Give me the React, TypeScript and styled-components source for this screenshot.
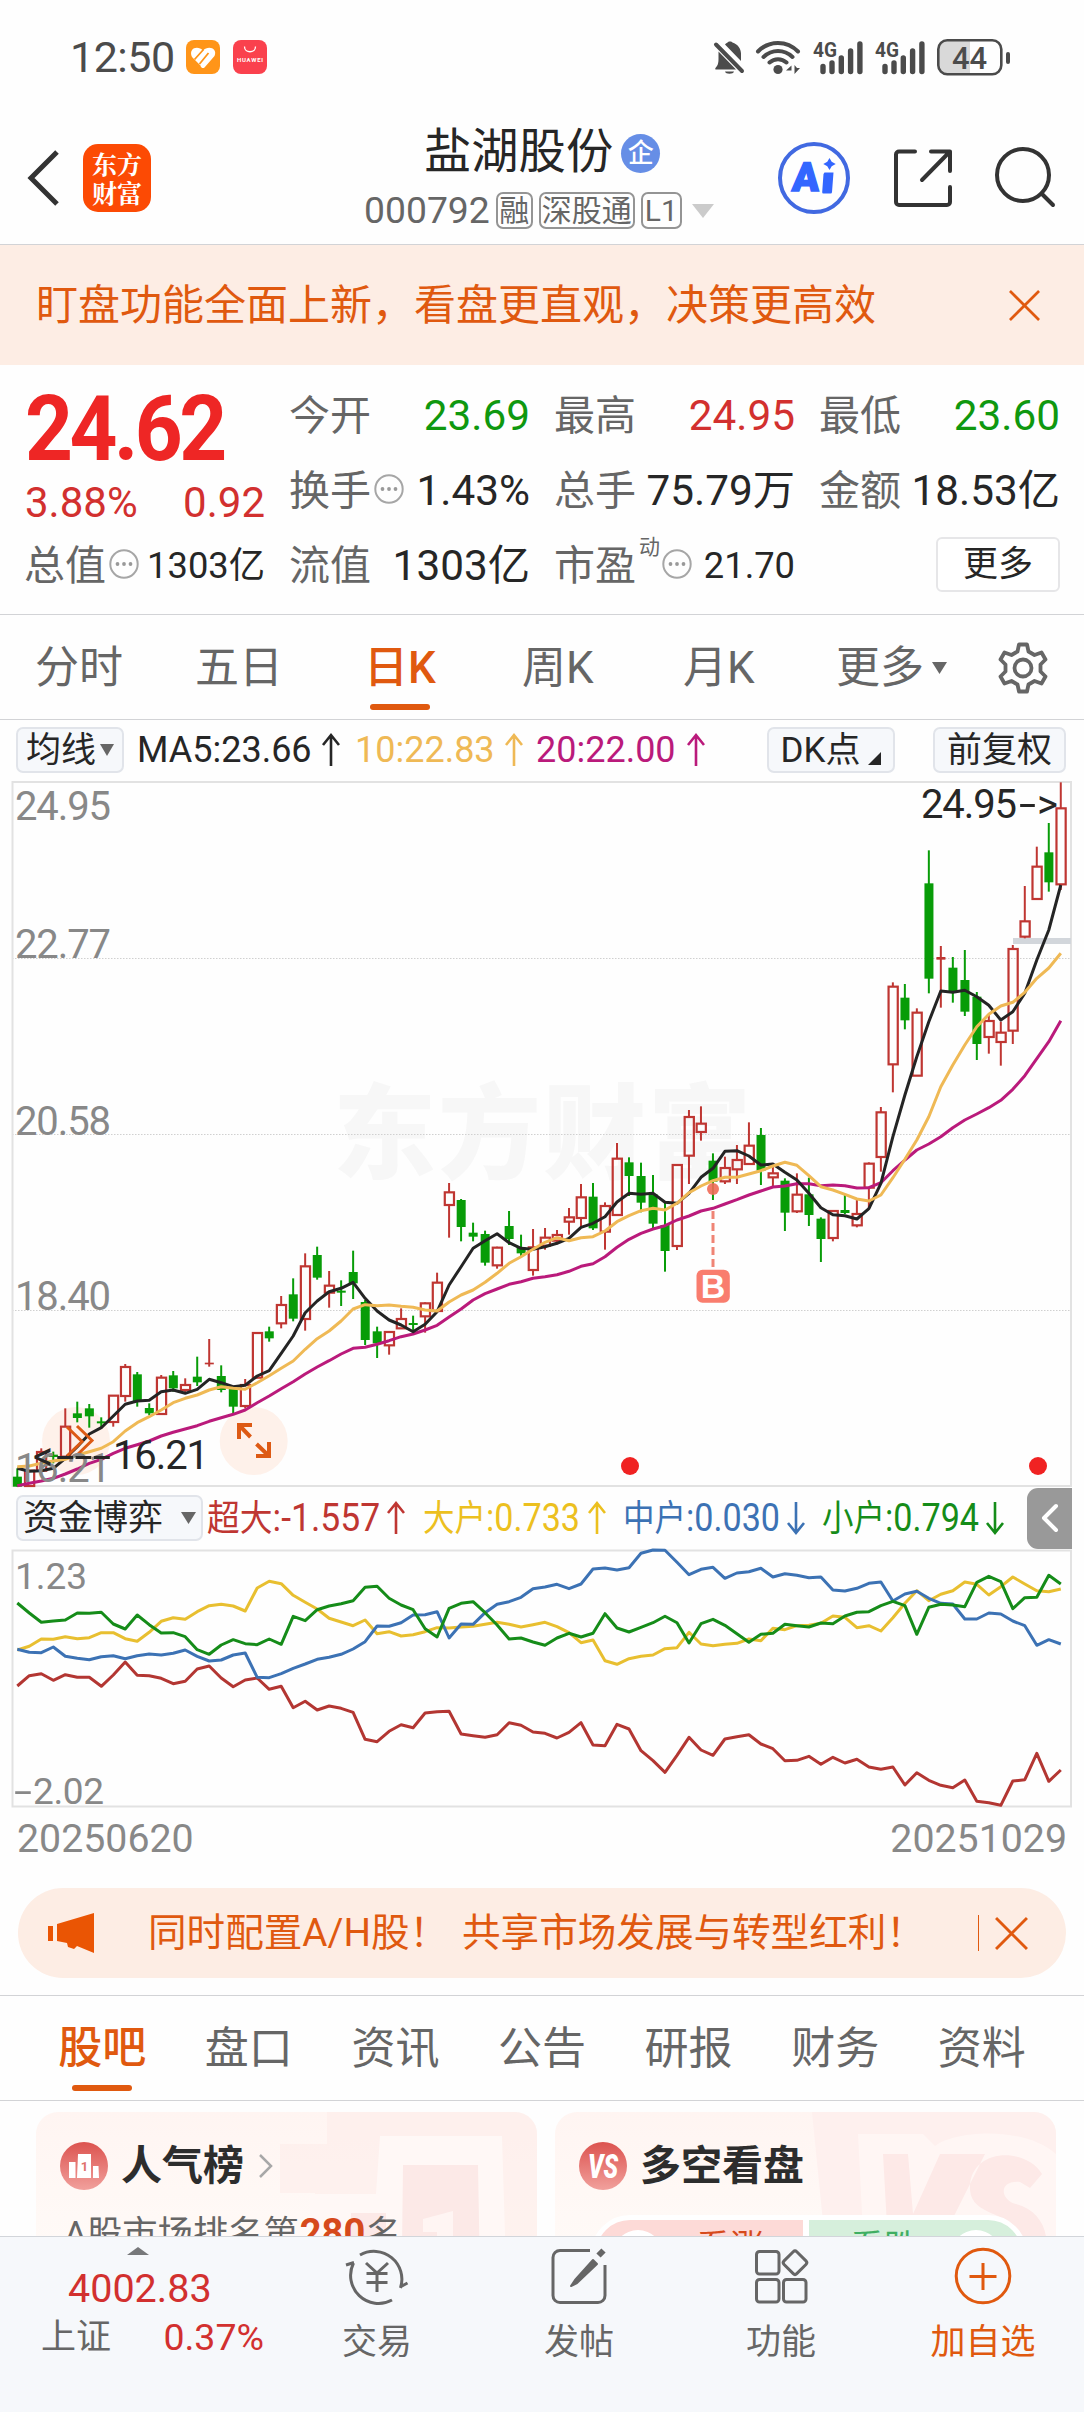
import React from "react";
import styled, { createGlobalStyle } from "styled-components";

const ORANGE = "#e0590f";
const RED = "#d2302f";
const GREEN = "#0f980f";
const GREY = "#666666";
const INK = "#262626";
const LINE = "#d2d3d6";

const GlobalStyle = createGlobalStyle`
  * { box-sizing: border-box; }
  body {
    margin: 0;
    background: #fefefe;
    color: ${INK};
    font-family: Roboto, "Noto Sans CJK SC", sans-serif;
    line-height: 1;
    white-space: nowrap;
  }
  svg { display: block; flex: none; overflow: visible; }
`;

const Screen = styled.div`
  width: 1084px;
  height: 2412px;
  display: flex;
  flex-direction: column;
  overflow: hidden;
  background: #fefefe;
`;

/* ---------- status bar ---------- */
const StatusBar = styled.div`
  height: 114px;
  flex: none;
  display: flex;
  align-items: center;
  justify-content: space-between;
  padding: 0 74px 0 70px;
`;
const StatusGroup = styled.div<{ $gap: number }>`
  display: flex;
  align-items: center;
  gap: ${(p) => p.$gap}px;
`;
const Clock = styled.span`
  font-size: 43px;
  letter-spacing: -0.5px;
  color: #4b4b4b;
  margin-right: -2px;
`;

/* ---------- header ---------- */
const Header = styled.header`
  height: 131px;
  flex: none;
  display: flex;
  align-items: center;
  padding: 0 29px 3px 26px;
  border-bottom: 1px solid ${LINE};
`;
const Logo = styled.div`
  width: 68px;
  height: 68px;
  margin-left: 24px;
  border-radius: 15px;
  background: #fc4a04;
  color: #fff;
  display: flex;
  flex-direction: column;
  align-items: center;
  justify-content: center;
  font: 700 25px/29px "Noto Serif CJK SC", "Noto Sans CJK SC", serif;
`;
const TitleBlock = styled.div`
  width: 350px;
  margin-left: 213px;
  display: flex;
  flex-direction: column;
  gap: 15px;
  padding-top: 3px;
`;
const StockName = styled.div`
  display: flex;
  align-items: center;
  gap: 8px;
  padding-left: 60px;
  height: 48px;
  font-size: 47.3px;
`;
const CorpBadge = styled.span`
  width: 39px;
  height: 39px;
  border-radius: 50%;
  background: #668ee6;
  color: #fff;
  font-size: 26px;
  font-weight: 500;
  display: flex;
  align-items: center;
  justify-content: center;
`;
const CodeRow = styled.div`
  display: flex;
  align-items: center;
  height: 37px;
  gap: 6px;
  color: ${GREY};
  font-size: 37.3px;
`;
const CodeTag = styled.span<{ $w: number }>`
  width: ${(p) => p.$w}px;
  height: 37px;
  border: 2px solid #949494;
  border-radius: 7px;
  font-size: 30px;
  display: flex;
  align-items: center;
  justify-content: center;
`;
const CodeCaret = styled.span`
  margin-left: 4px;
`;
const HeaderActions = styled.div`
  display: flex;
  align-items: center;
  margin-left: auto;
  gap: 42px;
`;

/* ---------- notice banner ---------- */
const Notice = styled.div`
  height: 120px;
  flex: none;
  background: #fdede4;
  display: flex;
  align-items: center;
  justify-content: space-between;
  padding: 1px 44px 0 36px;
  color: ${ORANGE};
  font-size: 42px;
`;

/* ---------- quote panel ---------- */
const Quote = styled.section`
  height: 250px;
  flex: none;
  border-bottom: 1px solid ${LINE};
  padding: 14px 24px 0 25px;
  display: grid;
  grid-template-columns: 240px 240px 240px 240px;
  grid-template-rows: 75px 75px 75px;
  column-gap: 25px;
`;
const PriceCell = styled.div`
  grid-row: span 2;
  display: flex;
  flex-direction: column;
`;
const Price = styled.div`
  font-size: 90px;
  font-weight: 700;
  letter-spacing: -3.8px;
  color: #ee2625;
  padding-top: 6px;
  height: 103px;
  transform: scaleX(0.93);
  transform-origin: left center;
`;
const Change = styled.div`
  display: flex;
  justify-content: space-between;
  font-size: 42px;
  color: ${RED};
`;
const Cell = styled.div`
  display: flex;
  align-items: center;
  justify-content: space-between;
`;
const CellLabel = styled.span`
  display: flex;
  align-items: center;
  color: ${GREY};
  font-size: 41px;
  gap: 3px;
  margin-left: -1px;
  svg { margin-top: -5px; }
`;
const SupMark = styled.span`
  font-size: 21px;
  align-self: flex-start;
  margin: -9px -1px 0 0;
`;
const CellValue = styled.span<{ $color?: string; $small?: boolean }>`
  font-size: ${(p) => (p.$small ? 36.3 : 42.3)}px;
  color: ${(p) => p.$color || INK};
`;
const MoreButton = styled.button`
  width: 124px;
  height: 55px;
  margin: -4px 0 0 auto;
  border: 2px solid #e6e6e8;
  border-radius: 6px;
  background: #fff;
  font: inherit;
  font-size: 35px;
  color: ${INK};
  padding: 0;
`;

/* ---------- period tabs ---------- */
const PeriodTabs = styled.nav`
  height: 105px;
  flex: none;
  border-bottom: 1px solid ${LINE};
  display: flex;
  padding-left: 35px;
`;
const PeriodTab = styled.div<{ $w: number; $active?: boolean }>`
  width: ${(p) => p.$w}px;
  display: flex;
  align-items: center;
  gap: 8px;
  padding-top: 2px;
  font-size: 44px;
  color: ${(p) => (p.$active ? ORANGE : GREY)};
  font-weight: ${(p) => (p.$active ? 500 : 400)};
`;
const Underlined = styled.span<{ $gap: number }>`
  height: 100%;
  display: flex;
  flex-direction: column;
  align-items: center;
  justify-content: flex-end;
  gap: ${(p) => p.$gap}px;
  padding-bottom: 9px;
  &::after {
    content: "";
    width: 60px;
    height: 6px;
    border-radius: 3px;
    background: ${ORANGE};
  }
`;

/* ---------- indicator rows ---------- */
const IndicatorRow = styled.div`
  height: 60px;
  flex: none;
  display: flex;
  align-items: center;
  padding: 0 16px 0 16px;
  font-size: 36px;
`;
const Chip = styled.div<{ $w: number; $ml?: number; $gap?: number }>`
  width: ${(p) => p.$w}px;
  height: 46px;
  flex: none;
  margin-left: ${(p) => p.$ml || 0}px;
  border: 2px solid #e1e4ea;
  border-radius: 7px;
  background: #f6f8fb;
  font-size: 35px;
  color: ${INK};
  display: flex;
  align-items: center;
  justify-content: center;
  gap: ${(p) => p.$gap || 0}px;
`;
const MaValue = styled.div<{ $w: number; $ml: number; $color: string }>`
  width: ${(p) => p.$w}px;
  flex: none;
  display: flex;
  align-items: center;
  justify-content: space-between;
  margin-left: ${(p) => p.$ml}px;
  color: ${(p) => p.$color};
`;
const FlowRow = styled.div`
  height: 62px;
  flex: none;
  display: flex;
  align-items: center;
  padding: 0 12px 0 16px;
`;
const FlowItem = styled.div<{ $w: number; $ml: number; $color: string }>`
  width: ${(p) => p.$w}px;
  flex: none;
  display: flex;
  align-items: center;
  justify-content: space-between;
  margin-left: ${(p) => p.$ml}px;
  color: ${(p) => p.$color};
`;
const FlowText = styled.span<{ $w: number; $scale?: number }>`
  width: ${(p) => p.$w}px;
  font-size: 36px;
  transform: scaleX(${(p) => p.$scale || 0.875});
  transform-origin: left center;
`;
const FlowNumber = styled.span`
  font-size: 39px;
`;
const CollapseButton = styled.div`
  width: 45px;
  height: 61px;
  margin-left: auto;
  border-radius: 11px 0 0 11px;
  background: #999;
  display: flex;
  align-items: center;
  justify-content: center;
`;
const Dates = styled.div`
  height: 79px;
  flex: none;
  display: flex;
  justify-content: space-between;
  padding: 11px 17px 0 17px;
  font-size: 39.3px;
  color: #888;
`;

/* ---------- promo ---------- */
const Promo = styled.div`
  height: 90px;
  flex: none;
  margin: 0 18px 17px;
  border-radius: 45px;
  background: #fdede4;
  color: ${ORANGE};
  display: flex;
  align-items: center;
  padding: 0 38px 0 30px;
  font-size: 38.6px;
`;
const PromoText = styled.span`
  margin-left: 54px;
  flex: 1;
  display: flex;
`;
const PromoPart = styled.span<{ $w: number }>`
  width: ${(p) => p.$w}px;
`;
const PromoDivider = styled.i`
  width: 1.5px;
  height: 36px;
  background: ${ORANGE};
  margin-right: 16px;
`;

/* ---------- section tabs ---------- */
const SectionTabs = styled.nav`
  height: 106px;
  flex: none;
  border-top: 1px solid ${LINE};
  border-bottom: 1px solid ${LINE};
  display: flex;
  padding: 0 29px;
`;
const SectionTab = styled.div<{ $active?: boolean }>`
  flex: 1;
  display: flex;
  align-items: center;
  justify-content: center;
  padding-top: 1px;
  font-size: 44px;
  font-weight: ${(p) => (p.$active ? 500 : 400)};
  color: ${(p) => (p.$active ? ORANGE : GREY)};
`;

/* ---------- cards ---------- */
const Cards = styled.section`
  height: 135px;
  flex: none;
  overflow: hidden;
  display: grid;
  grid-template-columns: 501px 501px;
  column-gap: 18px;
  padding: 11px 28px 0 36px;
`;
const Card = styled.article`
  position: relative;
  height: 220px;
  border-radius: 22px;
  overflow: hidden;
  background: linear-gradient(#fff5f2, #fffaf7 60%);
`;
const CardArt = styled.svg`
  position: absolute;
  inset: 0;
`;
const CardHead = styled.div`
  position: relative;
  display: flex;
  align-items: center;
  padding: 30px 0 0 24px;
  height: 78px;
  gap: 13px;
  font-size: 41px;
  font-weight: 700;
  color: #2d2d2d;
`;
const RankLine = styled.div`
  position: relative;
  padding: 24px 0 0 28px;
  font-size: 35.3px;
  color: ${GREY};
  b {
    font-size: 38px;
    color: #d64a1c;
    margin: 0 1px;
  }
`;
const VoteBar = styled.div`
  position: relative;
  display: flex;
  gap: 6px;
  margin: 25px 0 0 36px;
  width: 436px;
  height: 78px;
  border: 5px solid #fff;
  border-radius: 39px;
  background: #fff;
  overflow: hidden;
`;
const VoteSide = styled.div<{ $bull?: boolean }>`
  flex: 1;
  display: flex;
  flex-direction: ${(p) => (p.$bull ? "row" : "row-reverse")};
  align-items: flex-start;
  justify-content: space-between;
  padding: ${(p) => (p.$bull ? "10px 39px 0 17px" : "10px 21px 0 41px")};
  background: ${(p) => (p.$bull ? "#fddad7" : "#d6efdc")};
  color: ${(p) => (p.$bull ? "#d64a1c" : "#3fae62")};
  font-size: 34px;
`;
const VoteDot = styled.span`
  width: 50px;
  height: 50px;
  border-radius: 50%;
  background: #fff;
`;

/* ---------- bottom bar ---------- */
const BottomBar = styled.footer`
  flex: 1;
  border-top: 1px solid #d2d5da;
  background: #f6f8fb;
  display: flex;
`;
const IndexBlock = styled.div`
  width: 276px;
  display: flex;
  flex-direction: column;
  color: ${RED};
  padding-top: 10px;
`;
const IndexCaret = styled.span`
  padding-left: 127px;
`;
const IndexPoints = styled.div`
  padding: 14px 0 0 68px;
  font-size: 39.5px;
`;
const IndexRow = styled.div`
  display: flex;
  justify-content: space-between;
  align-items: center;
  padding: 10px 12px 0 41px;
  font-size: 37.5px;
`;
const IndexName = styled.span`
  font-size: 35px;
  color: ${GREY};
`;
const NavItem = styled.div<{ $accent?: boolean }>`
  width: 202px;
  display: flex;
  flex-direction: column;
  align-items: center;
  gap: 18px;
  padding-top: 8px;
  font-size: 35px;
  color: ${(p) => (p.$accent ? ORANGE : GREY)};
`;

/* ---------- chart data: one value per trading day, in thirds of a pixel from each chart's origin ---------- */
const FIRST_X = 17.3;
const STEP = 11.994;
const dayX = (i: number) => FIRST_X + i * STEP;

// [up or down, high, body top, body bottom, low]
type Candle = ["u" | "d", number, number, number, number];
const candles: Candle[] = [
  ["d", 1015, 1040, 1070, 1070], ["u", 1020, 1022, 1068, 1068], ["u", 955, 966, 1022, 1026], ["d", 965, 974, 981, 1000],
  ["u", 835, 890, 980, 985], ["d", 815, 850, 864, 877], ["d", 822, 835, 859, 893], ["d", 862, 874, 880, 892],
  ["u", 795, 797, 876, 890], ["u", 702, 711, 798, 815], ["d", 726, 733, 815, 830], ["d", 820, 834, 850, 856],
  ["u", 735, 743, 852, 852], ["d", 723, 736, 775, 785], ["u", 745, 765, 780, 790], ["d", 680, 740, 757, 768],
  ["u", 627, 698, 703, 710], ["d", 706, 738, 780, 787], ["d", 770, 775, 830, 852], ["u", 747, 765, 828, 835],
  ["u", 607, 609, 743, 745], ["d", 590, 604, 625, 635], ["u", 498, 525, 580, 595], ["d", 445, 493, 566, 574],
  ["u", 370, 409, 567, 602], ["d", 350, 375, 443, 449], ["u", 423, 467, 488, 533], ["d", 451, 482, 488, 528],
  ["d", 362, 426, 460, 507], ["d", 510, 516, 630, 645], ["d", 590, 604, 640, 684], ["u", 605, 606, 646, 674],
  ["u", 535, 567, 595, 595], ["d", 557, 579, 585, 600], ["u", 517, 520, 559, 608], ["u", 428, 458, 543, 543],
  ["u", 159, 187, 225, 323], ["d", 207, 210, 291, 334], ["d", 278, 308, 320, 334], ["d", 302, 312, 398, 407],
  ["u", 350, 353, 406, 416], ["d", 243, 288, 327, 345], ["d", 314, 352, 370, 380], ["u", 297, 352, 420, 437],
  ["u", 294, 323, 347, 359], ["u", 300, 315, 332, 343], ["u", 234, 262, 275, 314], ["u", 162, 202, 264, 292],
  ["d", 159, 200, 295, 300], ["u", 217, 228, 305, 359], ["u", 39, 86, 255, 255], ["d", 82, 97, 138, 198],
  ["d", 98, 138, 218, 247], ["d", 135, 193, 281, 297], ["d", 217, 285, 363, 425], ["u", 104, 105, 348, 360],
  ["u", -60, -39, 77, 162], ["u", -71, -19, 6, 32], ["d", 70, 92, 155, 210], ["u", 80, 114, 154, 162],
  ["u", 45, 90, 118, 162], ["u", -23, 47, 102, 102], ["d", -6, 15, 122, 165], ["u", 105, 130, 142, 170],
  ["d", 145, 152, 248, 303], ["u", 130, 194, 244, 249], ["d", 143, 193, 255, 288], ["d", 262, 266, 327, 396],
  ["u", 240, 243, 324, 334], ["d", 195, 240, 249, 252], ["u", 210, 252, 286, 292], ["u", 97, 101, 173, 235],
  ["u", -69, -53, 81, 125], ["u", -443, -430, -197, -113], ["d", -438, -397, -329, -302], ["u", -365, -352, -163, -163],
  ["d", -839, -740, -454, -410], ["u", -552, -519, -511, -367], ["d", -519, -487, -414, -382], ["d", -540, -450, -355, -342],
  ["d", -414, -400, -258, -210], ["u", -347, -327, -279, -229], ["u", -325, -292, -264, -193], ["u", -555, -543, -298, -258],
  ["u", -732, -626, -580, -575], ["u", -850, -790, -693, -693], ["d", -921, -833, -743, -715], ["u", -1043, -965, -737, -720],
];

const ma5 = [1015, 1024, 1022, 1015, 985, 950, 912, 893, 858, 823, 813, 811, 785, 780, 790, 778, 748, 758, 770, 766, 738, 722, 670, 618, 548, 513, 485, 475, 457, 505, 543, 570, 585, 605, 583, 545, 465, 410, 355, 332, 311, 338, 355, 358, 350, 340, 325, 292, 280, 260, 216, 190, 193, 190, 217, 220, 190, 142, 115, 64, 62, 78, 105, 102, 127, 150, 190, 233, 254, 257, 267, 236, 160, 20, -105, -220, -325, -417, -413, -419, -400, -374, -330, -355, -410, -510, -600, -735];
const ma10 = [1010, 1008, 1000, 993, 988, 975, 965, 955, 935, 903, 878, 860, 840, 818, 805, 795, 780, 770, 775, 778, 758, 737, 715, 693, 658, 626, 603, 573, 537, 524, 527, 525, 529, 532, 540, 543, 516, 495, 480, 457, 430, 400, 380, 358, 337, 323, 332, 323, 320, 303, 275, 257, 242, 235, 240, 220, 188, 168, 152, 142, 142, 132, 122, 108, 97, 106, 137, 170, 180, 193, 207, 213, 195, 143, 88, 30, -40, -130, -195, -255, -310, -347, -372, -383, -413, -455, -486, -530];
const ma20 = [1067, 1060, 1053, 1045, 1032, 1017, 1000, 988, 970, 955, 944, 933, 918, 907, 897, 887, 874, 863, 853, 840, 818, 798, 776, 755, 732, 711, 692, 672, 655, 652, 643, 632, 620, 612, 600, 586, 561, 537, 510, 491, 477, 463, 455, 445, 440, 434, 424, 409, 401, 380, 352, 328, 310, 297, 287, 270, 258, 243, 235, 222, 209, 195, 183, 171, 168, 161, 161, 167, 165, 167, 174, 173, 158, 122, 90, 60, 42, 20, -7, -30, -48, -67, -89, -122, -163, -214, -265, -328];

const flowHuge = [618, 587, 581, 601, 584, 592, 592, 619, 585, 546, 586, 587, 595, 611, 604, 567, 558, 594, 620, 600, 594, 628, 619, 683, 664, 690, 678, 685, 697, 778, 785, 754, 734, 743, 699, 695, 694, 762, 767, 772, 764, 728, 736, 756, 760, 774, 757, 728, 795, 797, 733, 747, 812, 842, 877, 826, 772, 810, 826, 777, 770, 764, 792, 806, 842, 841, 829, 853, 832, 849, 838, 861, 868, 861, 915, 878, 901, 916, 923, 900, 964, 968, 976, 903, 899, 820, 904, 870];
const flowMid = [508, 517, 518, 501, 529, 535, 539, 530, 527, 536, 527, 522, 525, 520, 510, 529, 543, 540, 525, 519, 592, 593, 581, 565, 552, 538, 532, 523, 507, 485, 438, 439, 428, 405, 404, 395, 474, 432, 433, 398, 373, 365, 352, 326, 321, 313, 326, 312, 267, 264, 270, 263, 220, 210, 211, 247, 284, 268, 262, 295, 279, 275, 265, 291, 281, 286, 293, 291, 330, 333, 325, 310, 306, 363, 342, 334, 355, 370, 372, 417, 417, 399, 402, 423, 437, 496, 479, 492];
const flowBig = [510, 499, 477, 478, 470, 476, 473, 458, 458, 476, 484, 457, 424, 413, 418, 395, 377, 373, 378, 393, 324, 304, 311, 346, 367, 387, 415, 426, 437, 420, 461, 455, 468, 464, 455, 443, 444, 441, 439, 433, 427, 433, 441, 434, 427, 440, 458, 488, 480, 542, 553, 536, 529, 525, 506, 503, 457, 492, 497, 493, 490, 477, 482, 445, 449, 437, 436, 430, 408, 412, 443, 437, 453, 413, 370, 332, 362, 343, 332, 306, 313, 345, 320, 291, 312, 332, 335, 327];
const flowSmall = [369, 399, 427, 423, 420, 399, 400, 397, 432, 447, 405, 434, 459, 458, 470, 509, 523, 495, 479, 491, 494, 477, 493, 409, 422, 389, 378, 371, 362, 322, 319, 355, 375, 389, 446, 471, 385, 370, 365, 398, 435, 477, 474, 486, 496, 474, 460, 471, 460, 401, 444, 456, 442, 428, 409, 428, 489, 431, 418, 436, 461, 487, 463, 460, 433, 437, 441, 429, 431, 408, 397, 395, 377, 364, 377, 463, 382, 373, 375, 380, 307, 289, 305, 386, 353, 352, 286, 312];

const series = (values: number[], origin: number) =>
  values.map((v, i) => `${dayX(i).toFixed(1)},${(origin + v / 3).toFixed(1)}`).join(" ");

const Trend = ({ values, origin, color }: { values: number[]; origin: number; color: string }) => (
  <polyline points={series(values, origin)} fill="none" stroke={color} strokeWidth={3} strokeLinejoin="round" />
);

const ChartLabel = styled.text<{ $size?: number; $color?: string }>`
  font-size: ${(p) => p.$size || 40}px;
  fill: ${(p) => p.$color || "#888"};
`;
const Watermark = styled.text`
  font: 900 103px "Noto Sans CJK SC", sans-serif;
  fill: #f7f7f7;
`;
const SignalLetter = styled.text`
  font: 700 34px "Liberation Sans", sans-serif;
  fill: #fff;
  text-anchor: middle;
`;

function PriceChart() {
  const originY = 350;
  return (
    <svg width="1084" height="707" viewBox="0 0 1084 707">
      <Watermark x="333" y="391" textLength="418">东方财富</Watermark>
      {[178.5, 354.5, 530.5].map((y) => (
        <line key={y} x1="12" x2="1071" y1={y} y2={y} stroke="#d0d0d0" strokeDasharray="1.5 1.5" />
      ))}
      <rect x="12.5" y="2" width="1058.5" height="704" fill="none" stroke="#e2e2e2" strokeWidth="2" />
      <circle cx="76" cy="661" r="34" fill="#fef1ea" />
      <circle cx="253.7" cy="661" r="34" fill="#fef1ea" />
      <rect x="1013" y="158" width="58" height="6" fill="#d2d6db" />
      {candles.map(([dir, hi, top, bottom, lo], i) => {
        const x = dayX(i);
        const y = (v: number) => originY + v / 3;
        const color = dir === "u" ? "#bf3632" : "#089c08";
        const flat = bottom - top < 9;
        return (
          <g key={i} stroke={color} strokeWidth="2">
            <line x1={x} x2={x} y1={y(hi)} y2={dir === "u" && !flat ? y(top) : y(lo)} />
            {dir === "u" && !flat && <line x1={x} x2={x} y1={y(bottom)} y2={y(lo)} />}
            {dir === "u" && !flat ? (
              <rect x={x - 4.3} y={y(top)} width="9.2" height={y(bottom) - y(top)} fill="none" strokeWidth="2.2" />
            ) : (
              <rect x={x - 4.4} y={y(top)} width="9" height={Math.max(1.5, y(bottom) - y(top))} fill={color} stroke="none" />
            )}
          </g>
        );
      })}
      <Trend values={ma20} origin={originY} color="#ba1a7b" />
      <Trend values={ma5} origin={originY} color="#242424" />
      <Trend values={ma10} origin={originY} color="#efb955" />
      <g>
        <line x1="713" x2="713" y1="431" y2="487" stroke="#ef8475" strokeWidth="3" strokeDasharray="8 4" />
        <circle cx="713" cy="409" r="6" fill="#ef6a56" opacity="0.9" />
        <rect x="696.5" y="489.7" width="33.3" height="33" rx="6" fill="#f97d6e" />
        <SignalLetter x="713" y="518">B</SignalLetter>
      </g>
      <circle cx="630" cy="686" r="9" fill="#f02222" />
      <circle cx="1038" cy="686" r="9" fill="#f02222" />
      <g fill="none" stroke="#dd5a14" strokeWidth="3">
        <path d="M67 647l15 14.5l-15 14.5M77 646l15 14.500l-15 14.500" />
        <path strokeWidth="4" d="M252 645h-13v14M239 645l11.500 12M256 676h13v-14M269 676l-12.500-12" />
      </g>
      <ChartLabel x="15" y="40" textLength="96">24.95</ChartLabel>
      <ChartLabel x="15" y="178" textLength="96">22.77</ChartLabel>
      <ChartLabel x="15" y="355" textLength="96">20.58</ChartLabel>
      <ChartLabel x="15" y="530" textLength="96">18.40</ChartLabel>
      <ChartLabel x="15" y="702" textLength="96">16.21</ChartLabel>
      <ChartLabel $color={INK} x="921" y="38" textLength="96">24.95</ChartLabel>
      <ChartLabel $color={INK} x="1019" y="38" textLength="17" lengthAdjust="spacingAndGlyphs">-</ChartLabel>
      <ChartLabel $color={INK} x="1037" y="38">&gt;</ChartLabel>
      <ChartLabel $color={INK} x="33" y="690">&lt;</ChartLabel>
      <ChartLabel $color={INK} x="56" y="690" textLength="55" lengthAdjust="spacingAndGlyphs">---</ChartLabel>
      <ChartLabel $color={INK} x="113" y="689" textLength="96">16.21</ChartLabel>
    </svg>
  );
}

function FlowChart() {
  return (
    <svg width="1084" height="260" viewBox="0 0 1084 260">
      <rect x="12.500" y="1.500" width="1058.500" height="256" fill="none" stroke="#e2e2e2" strokeWidth="2" />
      <ChartLabel $size={37} x="15" y="39.500">1.23</ChartLabel>
      <ChartLabel $size={37} x="14" y="255" textLength="18" lengthAdjust="spacingAndGlyphs">-</ChartLabel>
      <ChartLabel $size={37} x="33" y="255" textLength="71">2.02</ChartLabel>
      <Trend values={flowBig} origin={-69} color="#e8bf30" />
      <Trend values={flowHuge} origin={-69} color="#b33632" />
      <Trend values={flowMid} origin={-69} color="#3c72b4" />
      <Trend values={flowSmall} origin={-69} color="#158c19" />
    </svg>
  );
}

/* ---------- icons ---------- */
const Triangle = ({ w, h, color = GREY, up }: { w: number; h: number; color?: string; up?: boolean }) => (
  <svg width={w} height={h} viewBox="0 0 10 10" preserveAspectRatio="none">
    <path d={up ? "M0 10h10L5 0z" : "M0 0h10L5 10z"} fill={color} />
  </svg>
);
const Arrow = ({ down }: { down?: boolean }) => (
  <svg width="18" height="34" viewBox="0 0 18 34" fill="none" stroke="currentColor" strokeWidth="2.600">
    <path d="M9 1.500V33M1 12L9 2l8 10" transform={down ? "rotate(180 9 17)" : undefined} />
  </svg>
);
const Close = ({ size }: { size: number }) => (
  <svg width={size} height={size} viewBox="0 0 32 32" fill="none" stroke={ORANGE} strokeWidth="2.800">
    <path d="M1 1l30 30M31 1L1 31" />
  </svg>
);
const Info = () => (
  <svg width="30" height="30" viewBox="0 0 30 30">
    <circle cx="15" cy="15" r="13.700" fill="none" stroke="#a6a6a6" strokeWidth="2" />
    <g fill="#999">
      <circle cx="8.500" cy="15" r="1.900" />
      <circle cx="15" cy="15" r="1.900" />
      <circle cx="21.500" cy="15" r="1.900" />
    </g>
  </svg>
);
const Signal = () => (
  <svg width="50" height="35" viewBox="0 0 50 35">
    <text x="0" y="17" fontSize="21" fontWeight="700" fill="#4b4b4b" textLength="24" lengthAdjust="spacingAndGlyphs">4G</text>
    <g stroke="#4b4b4b" strokeWidth="5.400" strokeLinecap="round">
      <path d="M10 26.500v5M19 23v8.500M28.300 18v13.500M37.600 11v20.500M46.900 4v27.500" />
    </g>
  </svg>
);

function StatusIcons() {
  return (
    <StatusGroup $gap={12}>
      <svg width="30" height="35" viewBox="0 0 30 35">
        <path fill="#4b4b4b" d="M11 4.500C12 3.500 12.500 3 13.500 2.500c.5-1.500 4.500-1.500 5 0 5 1.500 8.500 6 8.500 11v7.500zM4.500 11.500L22 29.500H1.500c-1-1 .5-2 1.500-3.500 1-1.500 1.500-4 1.500-7zM11 31.500h9c-.5 3-8.500 3-9 0z" />
        <path d="M2 4.500L28 31" stroke="#4b4b4b" strokeWidth="4" strokeLinecap="round" />
      </svg>
      <svg width="45" height="35" viewBox="0 0 45 35">
        <g fill="none" stroke="#4b4b4b" strokeWidth="4" strokeLinecap="round">
          <path d="M2 11.500C13 0 31 0 42 11.500M7.500 17c8.500-8 20.500-8 29 0M13.500 22.500c5-4.500 12-4.500 17 0" />
        </g>
        <circle cx="22" cy="29.500" r="4.600" fill="#4b4b4b" />
        <path d="M30 30.500h5.500v-5zM38.500 25v9l5.500-6h-3z" fill="#4b4b4b" />
      </svg>
      <Signal />
      <Signal />
      <svg width="73" height="37" viewBox="0 0 73 37">
        <path d="M11 2h22v33H11a9 9 0 0 1-9-9V11a9 9 0 0 1 9-9z" fill="#d9d9d9" />
        <rect x="1.300" y="1.300" width="63" height="34" rx="9" fill="none" stroke="#4b4b4b" strokeWidth="2.600" />
        <rect x="69" y="13" width="4" height="12" rx="2" fill="#4b4b4b" />
        <text x="32.500" y="29.500" textAnchor="middle" fontSize="31" fontWeight="500" fill="#4b4b4b">44</text>
      </svg>
    </StatusGroup>
  );
}

function AppBadges() {
  return (
    <>
      <svg width="34" height="34" viewBox="0 0 34 34">
        <rect width="34" height="34" rx="8" fill="#ff9519" />
        <path d="M6 17C2 8 12 5 17 10.500 22 5 32 8 28.500 16L18.500 27.500c-1.500 1.500-4 0-4-2z" fill="#fff" />
        <path d="M8.500 19.500L17.500 9.500M13.500 24L22.500 13" stroke="#ff9519" strokeWidth="1.800" />
      </svg>
      <svg width="34" height="34" viewBox="0 0 34 34">
        <rect width="34" height="34" rx="8" fill="#fa414d" />
        <path d="M11.500 6.500c0 7 11 7 11 0" stroke="#fff" strokeWidth="1.300" fill="none" />
        <text x="4" y="22" fontSize="6" fontWeight="700" fill="#fff" textLength="26">HUAWEI</text>
      </svg>
    </>
  );
}

const periodTabs = [
  { label: "分时", w: 160 },
  { label: "五日", w: 169 },
  { label: "日K", w: 158, active: true },
  { label: "周K", w: 161 },
  { label: "月K", w: 153 },
];
const sections = ["股吧", "盘口", "资讯", "公告", "研报", "财务", "资料"];

export default function App() {
  return (
    <Screen>
      <GlobalStyle />
      <StatusBar>
        <StatusGroup $gap={13}>
          <Clock>12:50</Clock>
          <AppBadges />
        </StatusGroup>
        <StatusIcons />
      </StatusBar>

      <Header>
        <svg width="33" height="56" viewBox="0 0 33 56" fill="none" stroke="#333" strokeWidth="5">
          <path d="M31 2L5 28l26 26" />
        </svg>
        <Logo>
          <span>东方</span>
          <span>财富</span>
        </Logo>
        <TitleBlock>
          <StockName>
            盐湖股份
            <CorpBadge>企</CorpBadge>
          </StockName>
          <CodeRow>
            000792
            <CodeTag $w={37}>融</CodeTag>
            <CodeTag $w={96}>深股通</CodeTag>
            <CodeTag $w={41}>L1</CodeTag>
            <CodeCaret>
              <Triangle w={22} h={14} color="#cbcbcb" />
            </CodeCaret>
          </CodeRow>
        </TitleBlock>
        <HeaderActions>
          <svg width="76" height="76" viewBox="0 0 76 76">
            <circle cx="38" cy="38" r="34" fill="none" stroke="#4169e1" strokeWidth="4" />
            <text x="16" y="51" fontSize="40" fontWeight="900" fill="#3366ff" stroke="#3366ff" strokeWidth="1.500" textLength="27" lengthAdjust="spacingAndGlyphs" transform="skewX(-4) translate(3 0)">A</text>
            <path d="M48.500 32.500h9l-1.500 19.500a1.500 1.500 0 0 1-1.500 1.500h-7a1.300 1.300 0 0 1-1.300-1.500l1.300-18z" fill="#3366ff" />
            <path d="M53.500 18l2.200 3.800 4 2.200-4 2.200-2.200 3.800-2.200-3.800-4-2.200 4-2.200z" fill="#3366ff" />
          </svg>
          <svg width="58" height="58" viewBox="0 0 58 58" fill="none" stroke="#333" strokeWidth="4" strokeLinecap="round" strokeLinejoin="round">
            <path d="M21 2.500H5a3 3 0 0 0-3 3V53a3 3 0 0 0 3 3h48a3 3 0 0 0 3-3V38M37 2.500h19V22M55 3.500L28 31" />
          </svg>
          <svg width="61" height="61" viewBox="0 0 61 61" fill="none" stroke="#333" strokeWidth="4" strokeLinecap="round">
            <circle cx="29" cy="28" r="26" />
            <path d="M47.500 46.500L59 58" />
          </svg>
        </HeaderActions>
      </Header>

      <Notice>
        盯盘功能全面上新，看盘更直观，决策更高效
        <Close size={31} />
      </Notice>

      <Quote>
        <PriceCell>
          <Price>24.62</Price>
          <Change>
            <span>3.88%</span>
            <span>0.92</span>
          </Change>
        </PriceCell>
        <Cell><CellLabel>今开</CellLabel><CellValue $color={GREEN}>23.69</CellValue></Cell>
        <Cell><CellLabel>最高</CellLabel><CellValue $color={RED}>24.95</CellValue></Cell>
        <Cell><CellLabel>最低</CellLabel><CellValue $color={GREEN}>23.60</CellValue></Cell>
        <Cell><CellLabel>换手<Info /></CellLabel><CellValue>1.43%</CellValue></Cell>
        <Cell><CellLabel>总手</CellLabel><CellValue>75.79万</CellValue></Cell>
        <Cell><CellLabel>金额</CellLabel><CellValue>18.53亿</CellValue></Cell>
        <Cell><CellLabel>总值<Info /></CellLabel><CellValue $small>1303亿</CellValue></Cell>
        <Cell><CellLabel>流值</CellLabel><CellValue>1303亿</CellValue></Cell>
        <Cell><CellLabel>市盈<SupMark>动</SupMark><Info /></CellLabel><CellValue $small>21.70</CellValue></Cell>
        <Cell><MoreButton>更多</MoreButton></Cell>
      </Quote>

      <PeriodTabs>
        {periodTabs.map((t) => (
          <PeriodTab key={t.label} $w={t.w} $active={t.active}>
            {t.active ? <Underlined $gap={14}>{t.label}</Underlined> : t.label}
          </PeriodTab>
        ))}
        <PeriodTab $w={161}>
          更多
          <Triangle w={15} h={12} />
        </PeriodTab>
        <PeriodTab $w={60}>
          <svg width="52" height="52" viewBox="0 0 52 52" fill="none" stroke={GREY} strokeWidth="3.800" strokeLinejoin="round">
            <path d="M22 2.500h8l1.500 7 6 3.500 7-2.500 4 7-5 5v7l5 5-4 7-7-2.500-6 3.500-1.500 7h-8l-1.500-7-6-3.500-7 2.500-4-7 5-5v-7l-5-5 4-7 7 2.500 6-3.500z" />
            <circle cx="26" cy="26" r="8.500" />
          </svg>
        </PeriodTab>
      </PeriodTabs>

      <IndicatorRow>
        <Chip $w={108} $gap={4}>均线<Triangle w={14} h={12} /></Chip>
        <MaValue $w={203} $ml={13} $color={INK}>MA5:23.66<Arrow /></MaValue>
        <MaValue $w={168} $ml={15} $color="#efb955">10:22.83<Arrow /></MaValue>
        <MaValue $w={169} $ml={13} $color="#ba1a7b">20:22.00<Arrow /></MaValue>
        <Chip $w={128} $ml={62} $gap={8}>
          DK点
          <svg width="13" height="32" viewBox="0 0 13 32"><path d="M13 18v13H0z" fill={INK} /></svg>
        </Chip>
        <Chip $w={133} $ml={38}>前复权</Chip>
      </IndicatorRow>

      <PriceChart />

      <FlowRow>
        <Chip $w={187} $gap={18}>资金博弈<Triangle w={15} h={12} /></Chip>
        <FlowItem $w={198} $ml={4} $color="#bf3632">
          <FlowText $w={172} $scale={0.91}>超大<FlowNumber>:-1.557</FlowNumber></FlowText><Arrow />
        </FlowItem>
        <FlowItem $w={183} $ml={18} $color="#ecc01f">
          <FlowText $w={155}>大户<FlowNumber>:0.733</FlowNumber></FlowText><Arrow />
        </FlowItem>
        <FlowItem $w={182} $ml={17} $color="#3c72b4">
          <FlowText $w={155}>中户<FlowNumber>:0.030</FlowNumber></FlowText><Arrow down />
        </FlowItem>
        <FlowItem $w={182} $ml={17} $color="#158c19">
          <FlowText $w={155}>小户<FlowNumber>:0.794</FlowNumber></FlowText><Arrow down />
        </FlowItem>
        <CollapseButton>
          <svg width="18" height="30" viewBox="0 0 18 30" fill="none" stroke="#fff" strokeWidth="4" strokeLinecap="round" strokeLinejoin="round">
            <path d="M15 3L3 15l12 12" />
          </svg>
        </CollapseButton>
      </FlowRow>

      <FlowChart />
      <Dates>
        <span>20250620</span>
        <span>20251029</span>
      </Dates>

      <Promo>
        <svg width="46" height="40" viewBox="0 0 46 40">
          <path d="M46 0v40l-17-7-3 3-6-2-1-4-10-2V11zM0 13h5v15H0z" fill="#ea5504" />
        </svg>
        <PromoText>
          <PromoPart $w={314}>同时配置A/H股！</PromoPart>
          <PromoPart $w={460}>共享市场发展与转型红利！</PromoPart>
        </PromoText>
        <PromoDivider />
        <Close size={33} />
      </Promo>

      <SectionTabs>
        {sections.map((s, i) => (
          <SectionTab key={s} $active={i === 0}>
            {i === 0 ? <Underlined $gap={15}>{s}</Underlined> : s}
          </SectionTab>
        ))}
      </SectionTabs>

      <Cards>
        <Card>
          <CardArt width="501" height="220" viewBox="0 0 501 220">
            <path d="M291 0h210v220H279V81h-35V32h47z" fill="#fdecea" opacity="0.6" />
            <path d="M344 24h122l6 196H274V82h66z" fill="#fff8f6" />
            <path d="M367 53h75l3 167h-80zM315 101h35v119h-37z" fill="#fce9e7" />
            <path d="M387 107l30-8v121h-16V120h-14z" fill="#fff5f3" />
          </CardArt>
          <CardHead>
            <svg width="48" height="48" viewBox="0 0 48 48">
              <defs>
                <linearGradient id="badgeRed" x1="0" y1="0" x2="0" y2="1">
                  <stop offset="0" stopColor="#dc534f" />
                  <stop offset="1" stopColor="#f1a09c" />
                </linearGradient>
              </defs>
              <circle cx="24" cy="24" r="24" fill="url(#badgeRed)" />
              <path d="M9 20h6.500v16H9zM18 12h13v24H17zM33 24h5.500l.5 12h-6z" fill="#fff" />
              <text x="24.500" y="29" fontSize="13" fontWeight="700" textAnchor="middle" fill="#e0716c">1</text>
            </svg>
            人气榜
            <svg width="14" height="24" viewBox="0 0 14 24" fill="none" stroke="#a8a8a8" strokeWidth="2.500">
              <path d="M3 1l11 11L3 23" />
            </svg>
          </CardHead>
          <RankLine>A股市场排名第<b>280</b>名</RankLine>
        </Card>
        <Card>
          <CardArt width="501" height="220" viewBox="0 0 501 220">
            <path d="M257 0h244v220H279z" fill="#fef0ee" />
            <path d="M303 22h65l12 12c20-16 90-20 121 8v178H313z" fill="#fff6f4" />
            <path d="M328 42h25l5 60 27-60h45l-45 90h-52zM487 62c-16-28-74-26-72 16 2 28 44 20 40 44h-40v40h66c20-30 10-62-20-70-16-4-18-24 4-22l10 6z" fill="#fde9e7" />
          </CardArt>
          <CardHead>
            <svg width="48" height="48" viewBox="0 0 48 48">
              <circle cx="24" cy="24" r="24" fill="url(#badgeRed)" />
              <text x="24" y="36" fontSize="33" fontWeight="900" fontStyle="italic" textAnchor="middle" fill="#fff" textLength="30" lengthAdjust="spacingAndGlyphs">VS</text>
            </svg>
            多空看盘
          </CardHead>
          <VoteBar>
            <VoteSide $bull><VoteDot />看涨</VoteSide>
            <VoteSide><VoteDot />看跌</VoteSide>
          </VoteBar>
        </Card>
      </Cards>

      <BottomBar>
        <IndexBlock>
          <IndexCaret>
            <Triangle w={22} h={8} up color="#77787a" />
          </IndexCaret>
          <IndexPoints>4002.83</IndexPoints>
          <IndexRow>
            <IndexName>上证</IndexName>
            0.37%
          </IndexRow>
        </IndexBlock>
        <NavItem>
          <svg width="66" height="62" viewBox="0 0 66 62" fill="none" stroke={GREY} strokeWidth="3">
            <path d="M16 10A28 28 0 0 1 56.500 43M56 42l7.500-4M48 55A28 28 0 0 1 9.500 18M2 20l8-2.500" />
            <path d="M22 18l11 10 11-10M33 28v19M22.500 28.500h21M22.500 37.500h21" />
          </svg>
          交易
        </NavItem>
        <NavItem>
          <svg width="62" height="62" viewBox="0 0 62 62" fill="none" stroke={GREY} strokeWidth="3">
            <path d="M42 5.500H12a7 7 0 0 0-7 7v38a7 7 0 0 0 7 7h38a7 7 0 0 0 7-7V20" />
            <path d="M45 15L27 35l-4 6 6-3 20-19z" fill={GREY} strokeWidth="2" strokeLinejoin="round" />
            <path d="M50.500 10.500l5-5" strokeWidth="6" />
          </svg>
          发帖
        </NavItem>
        <NavItem>
          <svg width="62" height="62" viewBox="0 0 62 62" fill="none" stroke={GREY} strokeWidth="3" strokeLinejoin="round">
            <rect x="6.500" y="6.500" width="22.500" height="22.500" rx="3" />
            <rect x="6.500" y="34.500" width="22.500" height="22.500" rx="3" />
            <rect x="33.500" y="34.500" width="22.500" height="22.500" rx="3" />
            <rect x="36" y="8.700" width="18" height="18" rx="2.500" transform="rotate(45 45 17.700)" />
          </svg>
          功能
        </NavItem>
        <NavItem $accent>
          <svg width="62" height="62" viewBox="0 0 62 62" fill="none" stroke={ORANGE} strokeWidth="3">
            <circle cx="31" cy="31" r="26.800" />
            <path d="M31 18v27M17.500 31.500h27" />
          </svg>
          加自选
        </NavItem>
      </BottomBar>
    </Screen>
  );
}
